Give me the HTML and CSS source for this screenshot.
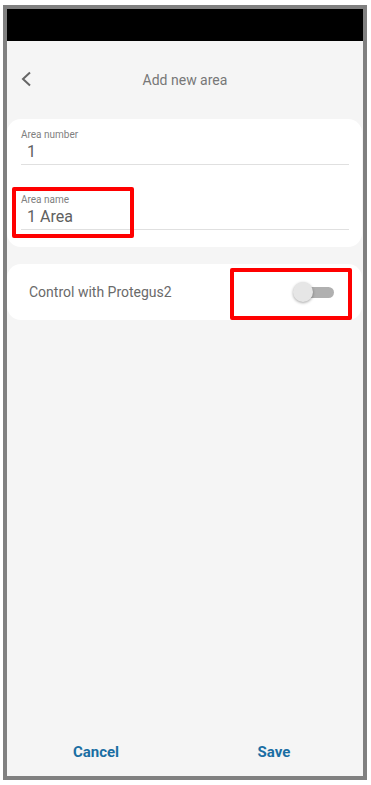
FILE: index.html
```html
<!DOCTYPE html>
<html>
<head>
<meta charset="utf-8">
<link rel="stylesheet" href="styles.css">
</head>
<body>
<div class="frame">
  <div class="statusbar"></div>
  <div class="header">
    <svg class="back" width="12" height="16" viewBox="0 0 12 16"><path d="M10 1.5 L3 8 L10 14.5" fill="none" stroke="#666" stroke-width="2"/></svg>
    <div class="title">Add new area</div>
  </div>
  <div class="card fields">
    <div class="field">
      <div class="label">Area number</div>
      <div class="value">1</div>
    </div>
    <div class="field second">
      <div class="label">Area name</div>
      <div class="value">1 Area</div>
    </div>
  </div>
  <div class="card row">
    <span class="rowtext">Control with Protegus2</span>
    <span class="toggle"><span class="track"></span><span class="thumb"></span></span>
  </div>
  <div class="spacer"></div>
  <div class="footer">
    <div class="btn">Cancel</div>
    <div class="btn">Save</div>
  </div>
  <div class="mark mark1"></div>
  <div class="mark mark2"></div>
</div>
</body>
</html>
```
FILE: styles.css
```css
html, body {
  margin: 0;
  padding: 0;
  background: #ffffff;
  font-family: Roboto, "Liberation Sans", sans-serif;
}
.frame {
  position: relative;
  box-sizing: border-box;
  margin: 5px 0 0 3px;
  width: 364px;
  height: 775px;
  border: 4px solid #808080;
  background: #f5f5f5;
  display: flex;
  flex-direction: column;
}
.statusbar {
  height: 32px;
  background: #000;
  flex: none;
}
.header {
  position: relative;
  height: 78px;
  flex: none;
  display: flex;
  align-items: center;
  justify-content: center;
}
.back {
  position: absolute;
  left: 13px;
  top: 30px;
}
.title {
  font-size: 14px;
  color: #777;
}
.card {
  background: #fff;
  border-radius: 14px;
  margin-right: 1px;
  flex: none;
}
.fields {
  padding: 10px 13px 17px 14px;
}
.field {
  border-bottom: 1px solid #e0e0e0;
  padding-bottom: 1px;
}
.field.second {
  margin-top: 29px;
}
.label {
  font-size: 10px;
  line-height: 12px;
  color: #808080;
}
.value {
  font-size: 16px;
  line-height: 22px;
  color: #606060;
  padding-left: 6px;
}
.row {
  margin-top: 17px;
  height: 56px;
  display: flex;
  align-items: center;
  justify-content: space-between;
  padding: 0 28px 0 22px;
}
.rowtext {
  font-size: 14px;
  color: #6a6a6a;
}
.toggle {
  position: relative;
  width: 40px;
  height: 22px;
}
.track {
  position: absolute;
  left: 1px;
  right: 0;
  top: 6px;
  height: 11px;
  border-radius: 6px;
  background: #b0b0b0;
}
.thumb {
  position: absolute;
  left: -1px;
  top: 1px;
  width: 20px;
  height: 20px;
  border-radius: 50%;
  background: #e6e6e6;
  box-shadow: 0 1px 3px rgba(0,0,0,0.35);
}
.spacer {
  flex: 1;
}
.footer {
  height: 48px;
  display: flex;
  flex: none;
}
.btn {
  flex: 1;
  display: flex;
  align-items: center;
  justify-content: center;
  font-size: 15px;
  font-weight: bold;
  color: #1a6ea3;
}
.mark {
  position: absolute;
  box-sizing: border-box;
  border: 4px solid #ff0000;
  border-radius: 2px;
}
.mark1 {
  left: 5px;
  top: 178px;
  width: 122px;
  height: 51px;
}
.mark2 {
  left: 223px;
  top: 259px;
  width: 122px;
  height: 52px;
}
```
